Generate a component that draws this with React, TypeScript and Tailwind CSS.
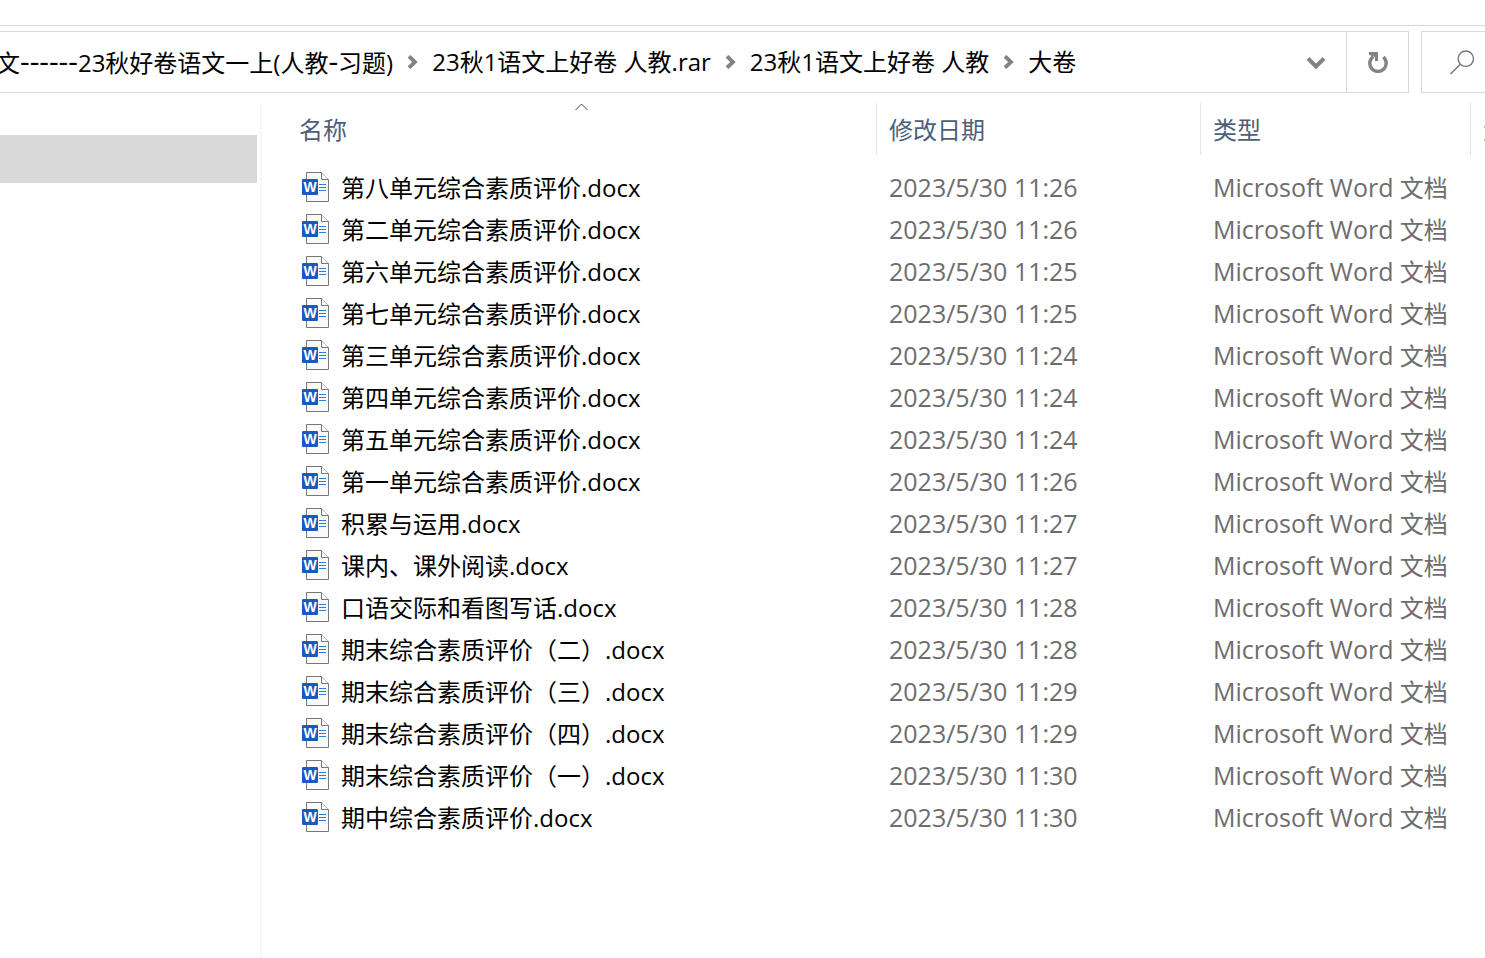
import type { ReactNode } from "react";

type FileEntry = { name: string; modified: string };

const files: FileEntry[] = [
  { name: "第八单元综合素质评价.docx", modified: "2023/5/30 11:26" },
  { name: "第二单元综合素质评价.docx", modified: "2023/5/30 11:26" },
  { name: "第六单元综合素质评价.docx", modified: "2023/5/30 11:25" },
  { name: "第七单元综合素质评价.docx", modified: "2023/5/30 11:25" },
  { name: "第三单元综合素质评价.docx", modified: "2023/5/30 11:24" },
  { name: "第四单元综合素质评价.docx", modified: "2023/5/30 11:24" },
  { name: "第五单元综合素质评价.docx", modified: "2023/5/30 11:24" },
  { name: "第一单元综合素质评价.docx", modified: "2023/5/30 11:26" },
  { name: "积累与运用.docx", modified: "2023/5/30 11:27" },
  { name: "课内、课外阅读.docx", modified: "2023/5/30 11:27" },
  { name: "口语交际和看图写话.docx", modified: "2023/5/30 11:28" },
  { name: "期末综合素质评价（二）.docx", modified: "2023/5/30 11:28" },
  { name: "期末综合素质评价（三）.docx", modified: "2023/5/30 11:29" },
  { name: "期末综合素质评价（四）.docx", modified: "2023/5/30 11:29" },
  { name: "期末综合素质评价（一）.docx", modified: "2023/5/30 11:30" },
  { name: "期中综合素质评价.docx", modified: "2023/5/30 11:30" },
];

function WordIcon() {
  return (
    <svg width="28" height="30" viewBox="0 0 28 30" className="mb-0.5 shrink-0" aria-hidden="true">
      <path d="M4.5 .5H19.5L26.5 7.5V29.5H4.5Z" fill="#fafafa" stroke="#797774" />
      <path d="M19.5 .5V7.5H26.5" fill="#fff" stroke="#797774" />
      <path d="M17 12.5H24M17 15.5H24M17 18.5H24" stroke="#2b7cd3" />
      <rect y="7" width="16" height="16" rx="1" fill="#185abd" />
      <text
        x="8"
        y="20"
        textAnchor="middle"
        fill="#fff"
        className="font-['Liberation_Sans',sans-serif] text-[14px] font-bold"
      >
        W
      </text>
    </svg>
  );
}

function Separator() {
  return (
    <svg width="11" height="14" viewBox="0 0 11 14" className="mx-[14px] shrink-0" aria-hidden="true">
      <path d="M2 1.3L8 7L2 12.7" fill="none" stroke="#838383" strokeWidth="3.8" />
    </svg>
  );
}

function Crumb({ children }: { children: ReactNode }) {
  return (
    <a href="#" className="shrink-0 whitespace-nowrap text-black">
      {children}
    </a>
  );
}

function Dashes({ children }: { children: string }) {
  return <span className="text-[30px] leading-none">{children}</span>;
}

function AddressBar() {
  return (
    <div className="mt-[5px] flex h-[62px] gap-3">
      <div className="flex min-w-0 flex-1 border border-l-0 border-[#d9d9d9]">
        <nav aria-label="地址" className="-ml-1 flex min-w-0 flex-1 items-center overflow-hidden">
          <Crumb>
            文<Dashes>------</Dashes>23秋好卷语文一上(人教<Dashes>-</Dashes>习题)
          </Crumb>
          <Separator />
          <Crumb>23秋1语文上好卷 人教.rar</Crumb>
          <Separator />
          <Crumb>23秋1语文上好卷 人教</Crumb>
          <Separator />
          <Crumb>大卷</Crumb>
        </nav>
        <button type="button" aria-label="展开" className="flex w-[60px] items-center justify-center">
          <svg width="20" height="16" viewBox="0 0 20 16" aria-hidden="true">
            <path d="M2 4.5L10 12.5L18 4.5" fill="none" stroke="#838383" strokeWidth="4" />
          </svg>
        </button>
        <button
          type="button"
          aria-label="刷新"
          className="flex w-[62px] items-center justify-center border-l border-[#d9d9d9]"
        >
          <svg width="20" height="22" viewBox="0 0 20 22" aria-hidden="true">
            <path d="M5.2 5.6A8.2 8.2 0 1 0 15.3 6" fill="none" stroke="#838383" strokeWidth="3.4" />
            <path d="M1 1H10V10H7V6.5L5 5L1 4Z" fill="#838383" />
          </svg>
        </button>
      </div>
      <label className="flex w-16 items-center overflow-hidden border border-r-0 border-[#d9d9d9] pl-7">
        <svg width="25" height="25" viewBox="0 0 25 25" className="shrink-0" aria-hidden="true">
          <circle cx="15.8" cy="8.7" r="7.7" fill="none" stroke="#777" strokeWidth="1.4" />
          <path d="M10.3 14.2L.5 24" stroke="#777" strokeWidth="1.4" />
        </svg>
        <input type="search" aria-label="搜索" className="min-w-0 flex-1 outline-none" />
      </label>
    </div>
  );
}

function HeaderCell({ label, sorted = false }: { label: string; sorted?: boolean }) {
  return (
    <th
      scope="col"
      className="relative h-[52px] overflow-hidden border-r border-[#e3e3e3] p-0 text-left font-normal last:border-r-0"
    >
      {sorted && (
        <svg width="13" height="8" viewBox="0 0 13 8" className="absolute inset-x-0 top-0 mx-auto" aria-hidden="true">
          <path d="M.5 7L6.5 1L12.5 7" fill="none" stroke="#444" />
        </svg>
      )}
      <button type="button" className="block w-full pt-0.5 pl-3 text-left whitespace-nowrap text-[#4c607a]">
        {label}
      </button>
    </th>
  );
}

export default function App() {
  return (
    <div className="flex min-h-screen flex-col overflow-hidden bg-white font-['Open_Sans','Noto_Sans_CJK_SC',sans-serif] text-[24px] leading-8">
      <div className="h-[26px] border-b border-[#d9d9d9]" />
      <AddressBar />
      <main className="mt-[10px] flex flex-1">
        <aside className="w-[262px] shrink-0 border-r-2 border-[#f7f7f7] pt-8">
          <div className="mr-[3px] h-12 bg-[#d9d9d9]" />
        </aside>
        <section className="min-w-0 flex-1 pl-[25px]">
          <table className="w-full table-fixed border-separate border-spacing-0">
            <colgroup>
              <col />
              <col className="w-[324px]" />
              <col className="w-[270px]" />
              <col className="w-[14px]" />
            </colgroup>
            <thead>
              <tr>
                <HeaderCell label="名称" sorted />
                <HeaderCell label="修改日期" />
                <HeaderCell label="类型" />
                <HeaderCell label="大小" />
              </tr>
            </thead>
            <tbody className="before:block before:h-3">
              {files.map((file) => (
                <tr key={file.name} className="h-[42px]">
                  <td className="p-0 pl-[15px]">
                    <div className="flex items-center gap-[11px] whitespace-nowrap text-black">
                      <WordIcon />
                      {file.name}
                    </div>
                  </td>
                  <td className="p-0 pb-0.5 pl-3 text-[25px] whitespace-nowrap text-[#6d6d6d]">{file.modified}</td>
                  <td className="p-0 pb-0.5 pl-3 whitespace-nowrap text-[#6d6d6d]">
                    <span className="text-[25px]">Microsoft Word</span> 文档
                  </td>
                  <td className="p-0" />
                </tr>
              ))}
            </tbody>
          </table>
        </section>
      </main>
    </div>
  );
}
